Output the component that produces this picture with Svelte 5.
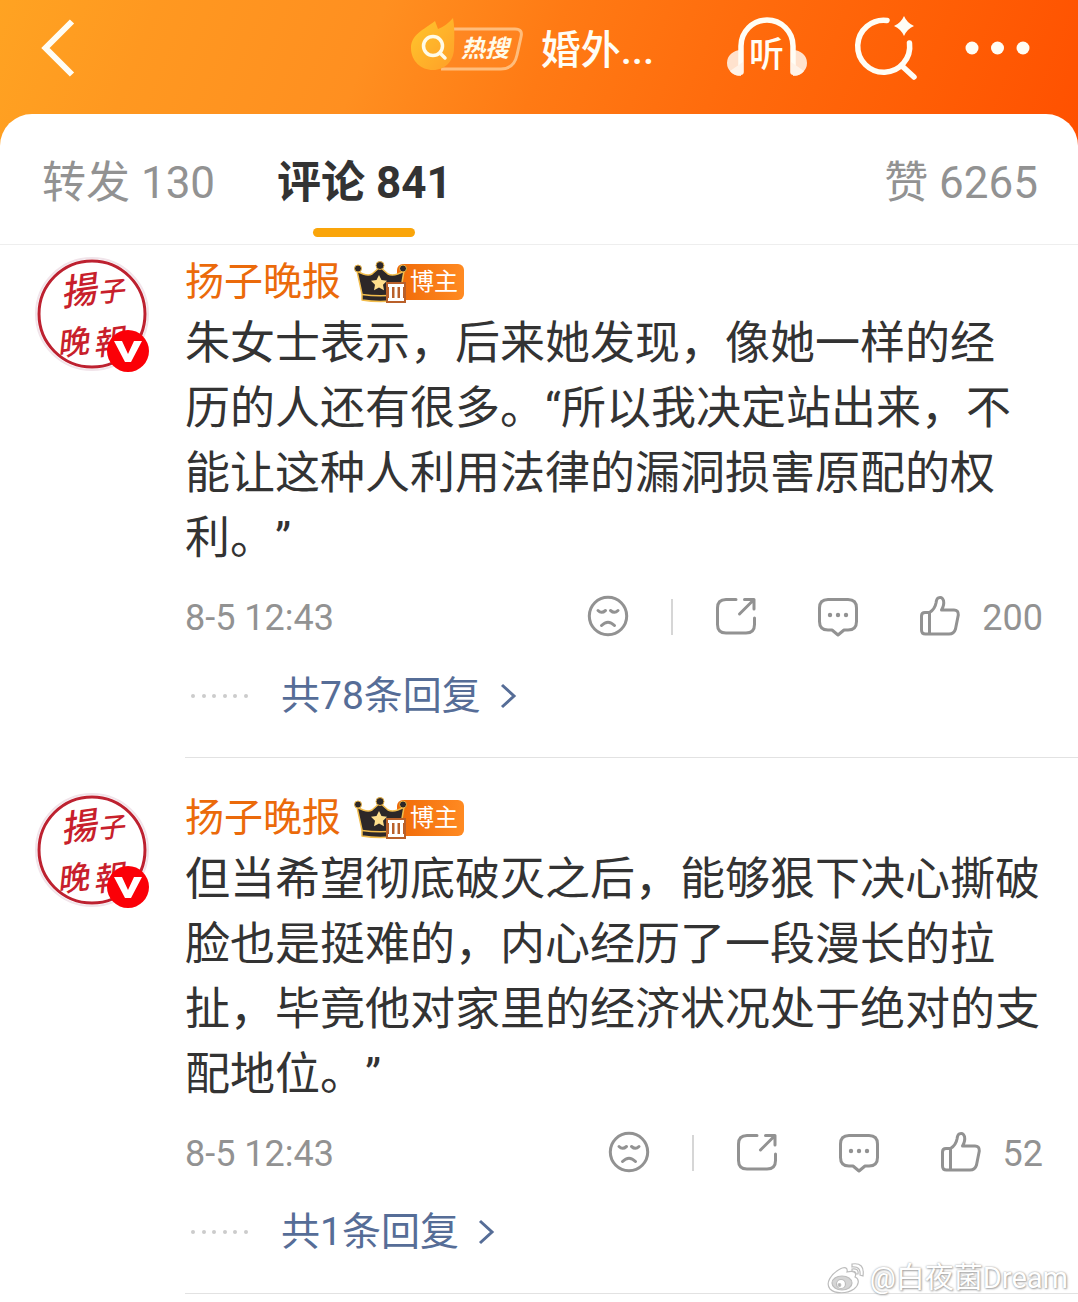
<script>
  const comments = [
    {
      id: 1,
      author: '扬子晚报',
      lines: [
        '朱女士表示，后来她发现，像她一样的经',
        '历的人还有很多。“所以我决定站出来，不',
        '能让这种人利用法律的漏洞损害原配的权',
        '利。”'
      ],
      time: '8-5 12:43',
      likes: 200,
      replies: 78
    },
    {
      id: 2,
      author: '扬子晚报',
      lines: [
        '但当希望彻底破灭之后，能够狠下决心撕破',
        '脸也是挺难的，内心经历了一段漫长的拉',
        '扯，毕竟他对家里的经济状况处于绝对的支',
        '配地位。”'
      ],
      time: '8-5 12:43',
      likes: 52,
      replies: 1
    }
  ];
</script>

<div class="page">
  <header>
    <button class="icon-btn" aria-label="返回">
      <svg width="34" height="58" viewBox="0 0 34 58"><path d="M31 2.500 4.500 29 31 55.500" fill="none" stroke="#fffdf5" stroke-width="6" /></svg>
    </button>
    <div class="topic">
      <svg width="112" height="54" viewBox="0 0 112 54">
        <defs>
          <linearGradient id="flame" x1="0" y1="0" x2="1" y2="1">
            <stop offset="0" stop-color="#ffc72c" />
            <stop offset="1" stop-color="#ff9f28" />
          </linearGradient>
        </defs>
        <path d="M40 11H104Q112 11 110 19L106 37Q103 51 90 51H30" fill="#ff8a2c" fill-opacity=".4" stroke="#ffbd7c" stroke-width="3" />
        <path d="M0 30C0 17 12 12 24 3L27 11C32 9 38 5 42 0Q44 10 43 30C43 43 34 52 22 52S0 43 0 30Z" fill="url(#flame)" />
        <circle cx="22" cy="28" r="9.500" fill="none" stroke="#fffbe8" stroke-width="3.500" />
        <path d="m29 35 5 5" stroke="#fffbe8" stroke-width="3.500" stroke-linecap="round" />
        <text class="hot" x="50" y="39">热搜</text>
      </svg>
      <h1>婚外...</h1>
    </div>
    <nav class="tools">
      <button class="icon-btn" aria-label="听">
        <svg width="80" height="60" viewBox="0 0 80 60">
          <path d="M14 32A14 13 0 0 0 14 58ZM66 32A14 13 0 0 1 66 58Z" fill="#ffe2cd" />
          <path d="M14 54V28A26 26 0 0 1 66 28V54" fill="none" stroke="#fffdf5" stroke-width="5.500" stroke-linecap="round" />
          <path d="M3 53Q9 60 16 56V44ZM77 53Q71 60 64 56V44Z" fill="#fff3e8" />
          <text class="listen" x="22" y="49">听</text>
        </svg>
      </button>
      <button class="icon-btn" aria-label="智能搜索">
        <svg width="62" height="64" viewBox="0 0 62 64" fill="none" stroke="#fffdf5" stroke-width="5.500" stroke-linecap="round">
          <path d="M32 4.500A26 26 0 1 0 54.500 27M47 50 59 61" />
          <path d="M49 0Q52 7 59 10 52 13 49 20 46 13 39 10 46 7 49 0Z" fill="#fffdf5" stroke="none" />
        </svg>
      </button>
      <button class="icon-btn" aria-label="更多">
        <svg width="66" height="14" viewBox="0 0 66 14" fill="#fffdf5"><circle cx="7" cy="7" r="6.500" /><circle cx="32.500" cy="7" r="6.500" /><circle cx="58" cy="7" r="6.500" /></svg>
      </button>
    </nav>
  </header>

  <main>
    <nav class="tabs">
      <button>转发 130</button>
      <button class="active">评论 841</button>
      <button class="last">赞 6265</button>
    </nav>

    {#each comments as c (c.id)}
      <article>
        <svg class="avatar" viewBox="0 0 114 114" role="img" aria-label={c.author}>
          <circle cx="57" cy="57" r="56" fill="#fff" stroke="#f1e4ea" stroke-width="2" />
          <circle cx="57" cy="57" r="53" fill="#fff" stroke="#bd2130" stroke-width="3" />
          <g class="seal">
            <text x="25" y="47" font-size="36" transform="rotate(-8 42 34)">揚</text>
            <text x="62" y="44" font-size="27" transform="rotate(-5 76 34)">子</text>
            <text x="21" y="97" font-size="32" transform="rotate(-8 38 84)">晚</text>
            <text x="57" y="97" font-size="32" transform="rotate(-8 70 84)">報</text>
          </g>
          <circle cx="93" cy="94" r="21" fill="#fb0007" />
          <path d="M79 84h8l6 13 6-13h8l-11 21h-6Z" fill="#fff" />
        </svg>
        <div class="content">
          <div class="who">
            <a href="#profile">{c.author}</a>
            <span class="badge">
              <svg class="crown" width="53" height="42" viewBox="0 0 53 42">
                <path d="M3 10Q13 16 18 13L26 6 34 13Q40 16 50 10L46 33V39Q26 42 8 39V33Z" fill="#2d2728" stroke="#f2bd4d" stroke-width="1.500" stroke-linejoin="round" />
                <path d="M8 33.500Q26 36 46 33.500" fill="none" stroke="#f2bd4d" stroke-width="1.500" />
                <g fill="#2d2728" stroke="#e9b344" stroke-width="1"><circle cx="4" cy="7.500" r="3.500" /><circle cx="26" cy="4.500" r="4" /><circle cx="49" cy="7.500" r="3.500" /></g>
                <path d="m25 14 2.500 5 5.500.8-4 3.900 1 5.500-5-2.700-5 2.700 1-5.500-4-3.900 5.500-.8Z" fill="#ffdf8d" />
                <path d="M32 21H52V42H32Z" fill="#b9602a" />
                <path d="M34 23H50V26H34ZM34 37H50V40H34ZM35 26H38V37H35ZM40.500 26H43.500V37H40.500ZM46 26H49V37H46Z" fill="#fff" />
              </svg>
              <span class="role">博主</span>
            </span>
          </div>
          <p>{#each c.lines as line}<span>{line}</span>{/each}</p>
          <div class="meta">
            <time>{c.time}</time>
            <button class="icon-btn face" aria-label="表情">
              <svg width="40" height="40" viewBox="0 0 40 40"><circle cx="20" cy="19" r="18.700" /><path d="M10 13.500Q13.500 17 17.500 13.500M22.500 13.500Q26.500 17 30 13.500M13.500 28.500Q20 22 26.500 28.500" /></svg>
            </button>
            <span class="bar"></span>
            <button class="icon-btn share" aria-label="转发">
              <svg width="40" height="40" viewBox="0 0 40 40"><path d="M20 2.500H10Q1.500 2.500 1.500 11V27.500Q1.500 36 10 36H30Q38.500 36 38.500 27.500V21" /><path d="M28.500 2.500H38V12M37 3.500 23.500 17" /></svg>
            </button>
            <button class="icon-btn chat" aria-label="回复">
              <svg width="40" height="40" viewBox="0 0 40 40"><path d="M10 2.500H30Q38.500 2.500 38.500 11V24.500Q38.500 33 30 33H26L20 38 14 33H10Q1.500 33 1.500 24.500V11Q1.500 2.500 10 2.500Z" /><g class="dots"><circle cx="12" cy="18" r="2.200" /><circle cx="20" cy="18" r="2.200" /><circle cx="28" cy="18" r="2.200" /></g></svg>
            </button>
            <button class="like">
              <svg width="40" height="40" viewBox="0 0 40 40"><path d="M9.500 15.500H5Q1.500 15.500 1.500 19V33Q1.500 37 5.500 37H29Q34 37 35.500 32L38.300 18Q38.500 13 34 13H21.500Q24.500 8 23.500 3.500 22-1 18 1 16.500 2 16 6 15 12 9.500 15.500ZM9.500 15.500V37" /></svg>
              <span>{c.likes}</span>
            </button>
          </div>
          <a class="replies" href="#replies">
            <svg width="60" height="6" viewBox="0 0 60 6" fill="#ccc">
              {#each [4, 15, 25, 36, 46, 57] as x}<circle cx={x} cy="3" r="2" />{/each}
            </svg>
            <span>共{c.replies}条回复</span>
            <svg width="16" height="26" viewBox="0 0 16 26"><path d="M2 2 14 13 2 24" fill="none" stroke="#566d97" stroke-width="3" /></svg>
          </a>
        </div>
      </article>
    {/each}
  </main>

  <div class="watermark">
    <svg width="38" height="32" viewBox="0 0 38 32" fill="#fff" stroke="#bdbdbd" stroke-width="1.200">
      <path d="M13 7C18 4 21 6 20 10 27 8 30 11 28 15 33 17 32 23 27 27 20 32 8 32 3 27-2 21 4 12 13 7Z" />
      <ellipse cx="15" cy="21" rx="10" ry="7" fill="#d5d5d5" />
      <circle cx="14" cy="22" r="4.500" />
      <circle cx="12.500" cy="23" r="1.300" fill="#aaa" />
      <path d="M25 2Q38 0 36 14L33 13Q34 4 25 5ZM25 7Q32 6 31 12L29 12Q29 9 25 9Z" />
    </svg>
    <span>@白夜菌Dream</span>
  </div>
</div>

<style>
  :global(body) {
    margin: 0;
    background: #fff;
  }
  .page {
    position: relative;
    overflow: hidden;
    min-height: 100vh;
    font-family: Roboto, 'Noto Sans CJK SC', sans-serif;
    background: #fff;
    color: #333;
    text-spacing-trim: space-all;
  }
  button {
    padding: 0;
    border: 0;
    background: none;
    font: inherit;
    color: inherit;
    cursor: pointer;
  }
  a {
    text-decoration: none;
  }
  svg {
    display: block;
    flex: none;
    overflow: visible;
  }
  .icon-btn {
    flex: none;
  }
  header {
    display: flex;
    align-items: center;
    box-sizing: border-box;
    height: 150px;
    padding: 0 47px 54px 41px;
    background: linear-gradient(112deg, #ffa322 0%, #ff9820 14%, #ff8f20 34%, #ff7a14 50%, #ff6a0c 68%, #ff5e05 84%, #ff5000 100%);
  }
  .topic {
    display: flex;
    align-items: center;
    gap: 18px;
    margin-left: auto;
    margin-right: 73px;
  }
  .topic svg {
    margin-bottom: 6px;
  }
  .hot {
    font-size: 24px;
    font-weight: 700;
    font-style: italic;
    fill: #fffbe8;
  }
  .listen {
    font-size: 35px;
    font-weight: 500;
    fill: #fffdf5;
  }
  h1 {
    margin: 0;
    padding-top: 6px;
    font-size: 40px;
    line-height: 48px;
    font-weight: 500;
    color: #fffdf5;
  }
  .tools {
    display: flex;
    align-items: center;
    gap: 48px;
  }
  main {
    position: relative;
    margin-top: -36px;
    border-radius: 32px 32px 0 0;
    background: #fff;
  }
  .tabs {
    display: flex;
    gap: 62px;
    height: 130px;
    padding: 0 40px 0 42px;
    border-bottom: 1px solid #eee;
    font-size: 44px;
    color: #929292;
  }
  .tabs button {
    position: relative;
  }
  .tabs .active {
    font-weight: 700;
    color: #333;
  }
  .tabs .active::after {
    content: '';
    position: absolute;
    left: 50%;
    bottom: 7px;
    width: 102px;
    height: 9px;
    margin-left: -51px;
    border-radius: 5px;
    background: #faa50a;
  }
  .tabs .last {
    margin-left: auto;
  }
  article {
    display: flex;
    gap: 36px;
    padding: 35px 0 0 35px;
  }
  .tabs + article {
    padding-top: 12px;
  }
  .avatar {
    width: 114px;
    height: 114px;
  }
  .seal {
    font-family: 'Noto Sans CJK TC', sans-serif;
    font-style: italic;
    font-weight: 500;
    fill: #c81f2c;
  }
  .content {
    flex: 1;
    min-width: 0;
    padding-bottom: 37px;
    border-bottom: 1px solid #e2e2e2;
  }
  .who {
    display: flex;
    align-items: center;
    gap: 13px;
    height: 50px;
    font-size: 39px;
    line-height: 48px;
  }
  .who a {
    color: #eb6a0a;
  }
  .badge {
    display: flex;
    align-items: center;
  }
  .crown {
    position: relative;
    z-index: 1;
  }
  .role {
    margin-left: -10px;
    padding: 0 6px 0 13px;
    border-radius: 6px;
    background: linear-gradient(90deg, #f06a08, #ff8a22);
    color: #fff;
    font-size: 24px;
    line-height: 36px;
  }
  p {
    margin: 4px 0 22px;
    font-size: 45px;
    line-height: 65px;
  }
  p span {
    display: block;
    white-space: nowrap;
  }
  .meta {
    display: flex;
    align-items: center;
    height: 48px;
    padding-right: 35px;
    font-size: 36px;
    line-height: 48px;
    color: #929292;
  }
  .meta svg {
    fill: none;
    stroke: #929292;
    stroke-width: 3px;
    stroke-linejoin: round;
    stroke-linecap: round;
  }
  .meta .dots {
    fill: #929292;
    stroke: none;
  }
  .meta time,
  .like span {
    padding-top: 2px;
  }
  .face {
    margin-left: auto;
  }
  .bar {
    width: 2px;
    height: 36px;
    margin: 0 43px;
    background: #d6d6d6;
  }
  .chat {
    margin: 0 62px;
  }
  .like {
    display: flex;
    align-items: center;
    gap: 22px;
  }
  .replies {
    display: flex;
    align-items: center;
    height: 48px;
    margin-top: 31px;
    padding-left: 4px;
    font-size: 39px;
    line-height: 48px;
    color: #566d97;
  }
  .replies span {
    margin: 0 19px 0 32px;
  }
  .watermark {
    position: absolute;
    right: 10px;
    bottom: 8px;
    display: flex;
    align-items: center;
    gap: 5px;
    font-size: 29px;
    line-height: 32px;
    color: #fff;
    text-shadow: 0 0 2px #999, 1px 1px 2px #aaa;
  }
</style>
